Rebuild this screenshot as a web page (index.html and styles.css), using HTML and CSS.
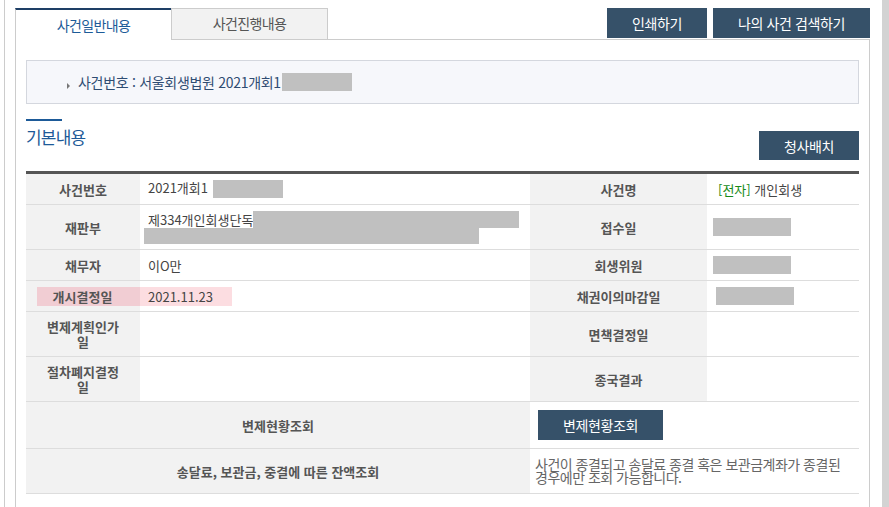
FILE: index.html
```html
<!DOCTYPE html>
<html lang="ko">
<head>
    <meta charset="UTF-8">
    <meta name="viewport" content="width=device-width, initial-scale=1.0">
    <title>사건일반내용</title>
    <link rel="stylesheet" href="styles.css">
</head>
<body>
    <div class="screen">
        <div class="frame">
            <div class="content">
                <div class="head">
                    <div class="tabs">
                        <a class="tab on">사건일반내용</a>
                        <a class="tab">사건진행내용</a>
                    </div>
                    <div class="actions">
                        <button class="btn btn-print">인쇄하기</button>
                        <button class="btn btn-search">나의 사건 검색하기</button>
                    </div>
                </div>

                <div class="panel">
                    <div class="case-box">
                        <span class="bullet"></span>사건번호 : 서울회생법원 2021개회1<span class="redact r-case"></span>
                    </div>

                    <div class="title-row">
                        <h3 class="sub-title">기본내용</h3>
                        <button class="btn btn-map">청사배치</button>
                    </div>

                    <table class="info">
                        <colgroup>
                            <col style="width: 114px">
                            <col style="width: 390px">
                            <col style="width: 177px">
                            <col style="width: 152px">
                        </colgroup>
                        <tr class="h31">
                            <th>사건번호</th>
                            <td>2021개회1<span class="redact r-no"></span></td>
                            <th>사건명</th>
                            <td><span class="name"><span class="green">[전자]</span> 개인회생</span></td>
                        </tr>
                        <tr class="h45">
                            <th>재판부</th>
                            <td>
                                <div class="court">제334개인회생단독<span class="redact r-court1"></span></div>
                                <div class="redact r-court2"></div>
                            </td>
                            <th>접수일</th>
                            <td><span class="redact r-date"></span></td>
                        </tr>
                        <tr class="h31">
                            <th>채무자</th>
                            <td>이O만</td>
                            <th>회생위원</th>
                            <td><span class="redact r-date"></span></td>
                        </tr>
                        <tr class="h31">
                            <th class="marked"><span class="mark-l">개시결정일</span></th>
                            <td><span class="mark-r">2021.11.23</span></td>
                            <th>채권이의마감일</th>
                            <td><span class="redact r-date r-shift"></span></td>
                        </tr>
                        <tr class="h45">
                            <th class="narrow">변제계획인가일</th>
                            <td></td>
                            <th>면책결정일</th>
                            <td></td>
                        </tr>
                        <tr class="h45">
                            <th class="narrow">절차폐지결정일</th>
                            <td></td>
                            <th>종국결과</th>
                            <td></td>
                        </tr>
                        <tr class="h47">
                            <th colspan="2">변제현황조회</th>
                            <td colspan="2"><button class="btn btn-pay">변제현황조회</button></td>
                        </tr>
                        <tr class="h45">
                            <th colspan="2">송달료, 보관금, 중결에 따른 잔액조회</th>
                            <td colspan="2" class="note">사건이 종결되고 송달료 종결 혹은 보관금계좌가 종결된 경우에만 조회 가능합니다.</td>
                        </tr>
                    </table>
                </div>
            </div>
        </div>
        <div class="scrollbar"></div>
    </div>
</body>
</html>
```

FILE: styles.css
```css
body {
    margin: 0;
    background-color: #fff;
    font-family: "Noto Sans CJK KR", "Noto Sans", sans-serif;
    color: #444;
}
.screen {
    display: flex;
    min-height: 100vh;
    overflow: hidden;
}
.frame {
    flex: 1;
    padding-left: 4px;
}
.content {
    border-left: 1px solid #ccc;
    min-height: 100vh;
    padding: 8px 12px 0 10px;
    box-sizing: border-box;
}
.scrollbar {
    width: 7px;
    background-color: #d3d3d3;
}

/* tabs + top buttons */
.head {
    display: flex;
    justify-content: space-between;
    align-items: flex-start;
    height: 31px;
}
.tabs {
    display: flex;
}
.tab {
    box-sizing: border-box;
    display: block;
    height: 31px;
    line-height: 29px;
    text-align: center;
    font-size: 14px;
    letter-spacing: -0.6px;
    color: #555;
    background-color: #f2f2f2;
    border: 1px solid #ccc;
    border-bottom: 0;
    width: 157px;
}
.tab.on {
    position: relative;
    z-index: 1;
    width: 156px;
    height: 32px;
    line-height: 30px;
    border: 0;
    border-top: 2px solid #1e3f66;
    border-left: 1px solid #ccc;
    background-color: #fff;
    color: #1d5b98;
}
.actions {
    display: flex;
    gap: 6px;
}
.btn {
    font-family: inherit;
    font-size: 14px;
    letter-spacing: -0.4px;
    color: #fff;
    background-color: #365169;
    border: none;
    height: 30px;
    padding: 0;
    cursor: pointer;
}
.btn-print { width: 100px; }
.btn-search { width: 157px; }
.btn-map { width: 100px; height: 29px; margin-top: 12px; }
.btn-pay { width: 125px; display: block; }

/* panel */
.panel {
    border: 1px solid #ccc;
    padding: 20px 10px 40px;
}
.case-box {
    box-sizing: border-box;
    height: 44px;
    border: 1px solid #d4d7de;
    background-color: #f6f7fb;
    padding-left: 40px;
    display: flex;
    align-items: center;
    font-size: 14px;
    letter-spacing: -0.3px;
    color: #2f4c72;
}
.bullet {
    width: 0;
    height: 0;
    border-left: 3px solid #777;
    border-top: 3px solid transparent;
    border-bottom: 3px solid transparent;
    margin: 7px 8px 0 0;
}
.redact {
    display: inline-block;
    background-color: #c0c0c0;
    vertical-align: middle;
}
.r-case { width: 70px; height: 18px; margin-left: 1px; }
.r-no { width: 70px; height: 18px; margin-left: 5px; }
.r-court1 { width: 266px; height: 17px; vertical-align: top; }
.r-court2 { display: block; width: 335px; height: 16px; margin-left: -4px; }
.r-date { width: 78px; height: 18px; margin-left: -2px; }
.r-shift { margin-left: 1px; }

.title-row {
    display: flex;
    justify-content: space-between;
    align-items: flex-start;
    margin-top: 15px;
    margin-bottom: 11px;
}
.sub-title {
    margin: 0;
    font-size: 17px;
    font-weight: normal;
    letter-spacing: -0.8px;
    line-height: 24px;
    color: #1d5a98;
}
.sub-title::before {
    content: "";
    display: block;
    width: 36px;
    height: 2px;
    background-color: #1d5a98;
    margin-bottom: 4px;
}

/* table */
.info {
    width: 833px;
    table-layout: fixed;
    border-collapse: separate;
    border-spacing: 0;
    border-top: 3px solid #555;
    font-size: 13px;
}
.info th, .info td {
    box-sizing: border-box;
    border-bottom: 1px solid #ddd;
    padding: 0 8px;
    line-height: 15px;
    vertical-align: middle;
}
.info th {
    background-color: #f2f2f2;
    color: #555;
    font-weight: bold;
    text-align: center;
    padding: 0 12px;
}
.info th.narrow {
    padding: 0 18px;
    word-break: break-all;
}
.info td { color: #444; }
.h31 th, .h31 td { height: 31px; }
.h45 th, .h45 td { height: 45px; }
.h47 th, .h47 td { height: 47px; }

.court { line-height: 17px; }
.name { margin-left: 3px; }
.green { color: #178a17; }

.info th.marked { padding: 0; }
.mark-l {
    display: block;
    margin-left: 11px;
    padding-right: 12px;
    line-height: 19px;
    background-color: #f1cdd3;
}
.mark-r {
    display: inline-block;
    margin-left: -8px;
    padding-left: 8px;
    width: 84px;
    line-height: 19px;
    background-color: #fcdde1;
}
.info td.note {
    padding-left: 5px;
    color: #666;
    font-size: 14px;
    letter-spacing: -0.5px;
    line-height: 13px;
    word-break: keep-all;
}
```
